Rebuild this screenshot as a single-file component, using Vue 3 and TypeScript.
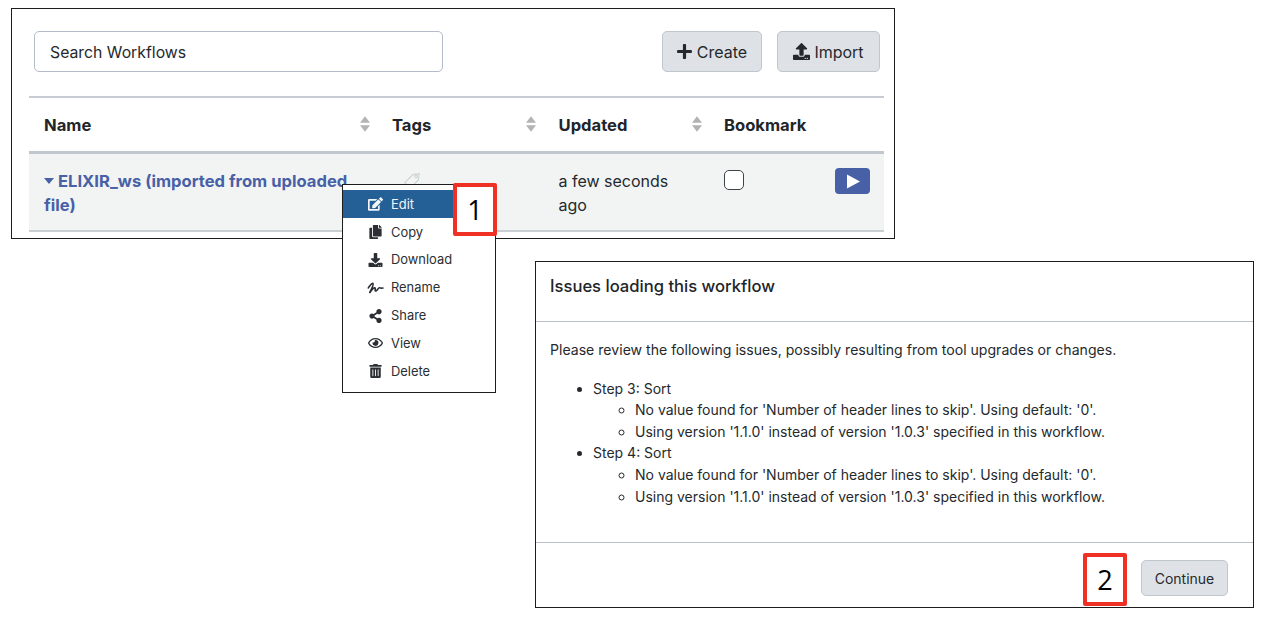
<template>
  <main class="canvas">
    <section class="panel list-panel">
      <div class="toolbar">
        <div class="search">Search Workflows</div>
        <button class="btn create-btn">
          <svg class="btn-icon" viewBox="0 0 448 512"><path :d="icons.plus" /></svg>Create
        </button>
        <button class="btn import-btn">
          <svg class="btn-icon upload" viewBox="0 0 512 512"><path :d="icons.upload" /></svg>Import
        </button>
      </div>
      <div class="grid-table">
        <div class="head-row">
          <div v-for="col in columns" :key="col.label" class="head-cell">
            <span>{{ col.label }}</span>
            <svg v-if="col.sortable" class="sort" viewBox="0 0 11 17"><path d="M5.5 0L11 7H0zM5.5 17L0 10h11z" /></svg>
          </div>
        </div>
        <div class="body-row">
          <div class="name-cell">
            <svg class="caret" viewBox="0 0 10 6"><path d="M0 0h10L5 6z" /></svg>ELIXIR_ws (imported from uploaded file)
          </div>
          <div class="tags-cell">
            <svg class="tag" viewBox="0 0 20 20"><path d="M2 13L11 4l7-1-1 7-9 9z" /><circle cx="14.5" cy="6" r="1.4" /></svg>
          </div>
          <div class="updated-cell">a few seconds ago</div>
          <div class="bookmark-cell">
            <span class="checkbox"></span>
            <button class="run-btn"><svg viewBox="0 0 14 15"><path d="M1 0.5L14 7.5L1 14.5z" /></svg></button>
          </div>
        </div>
      </div>
    </section>

    <ul class="menu">
      <li v-for="item in menu" :key="item.label" class="menu-item" :class="{ active: item.label === 'Edit' }">
        <svg class="menu-icon" :viewBox="item.box" :class="item.cls"><path :d="item.d" /></svg>
        {{ item.label }}
      </li>
    </ul>
    <div class="callout callout-one">1</div>

    <section class="panel modal-panel">
      <header class="modal-head">Issues loading this workflow</header>
      <div class="modal-body">
        <p>Please review the following issues, possibly resulting from tool upgrades or changes.</p>
        <ul class="steps">
          <li v-for="step in steps" :key="step">
            {{ step }}
            <ul>
              <li>No value found for 'Number of header lines to skip'. Using default: '0'.</li>
              <li>Using version '1.1.0' instead of version '1.0.3' specified in this workflow.</li>
            </ul>
          </li>
        </ul>
      </div>
      <footer class="modal-foot">
        <button class="btn continue-btn">Continue</button>
      </footer>
    </section>
    <div class="callout callout-two">2</div>
  </main>
</template>

<script setup lang="ts">
interface MenuItem {
  label: string
  box: string
  d: string
  cls?: string
}

const icons = {
  plus: "M416 208H272V64c0-17.67-14.33-32-32-32h-32c-17.67 0-32 14.33-32 32v144H32c-17.67 0-32 14.33-32 32v32c0 17.67 14.33 32 32 32h144v144c0 17.67 14.33 32 32 32h32c17.67 0 32-14.33 32-32V304h144c17.67 0 32-14.33 32-32v-32c0-17.67-14.33-32-32-32z",
  upload: "M296 384h-80c-13.3 0-24-10.7-24-24V192h-87.7c-17.8 0-26.7-21.5-14.1-34.1L242.3 5.7c7.5-7.5 19.8-7.5 27.3 0l152.2 152.2c12.6 12.6 3.7 34.1-14.1 34.1H320v168c0 13.3-10.7 24-24 24zm216-8v112c0 13.3-10.7 24-24 24H24c-13.3 0-24-10.7-24-24V376c0-13.3 10.7-24 24-24h136v8c0 30.9 25.1 56 56 56h80c30.9 0 56-25.1 56-56v-8h136c13.3 0 24 10.7 24 24zm-124 88c0-11-9-20-20-20s-20 9-20 20 9 20 20 20 20-9 20-20zm64 0c0-11-9-20-20-20s-20 9-20 20 9 20 20 20 20-9 20-20z",
}

const columns = [
  { label: "Name", sortable: true },
  { label: "Tags", sortable: true },
  { label: "Updated", sortable: true },
  { label: "Bookmark", sortable: false },
]

const menu: MenuItem[] = [
  {
    label: "Edit",
    box: "0 0 576 512",
    d: "M402.6 83.2l90.2 90.2c3.8 3.8 3.8 10 0 13.8L274.4 405.6l-92.8 10.3c-12.4 1.4-22.9-9.1-21.5-21.5l10.3-92.8L388.8 83.2c3.8-3.8 10-3.8 13.8 0zm162-22.9l-48.8-48.8c-15.2-15.2-39.9-15.2-55.2 0l-35.4 35.4c-3.8 3.8-3.8 10 0 13.8l90.2 90.2c3.8 3.8 10 3.8 13.8 0l35.4-35.4c15.2-15.3 15.2-40 0-55.2zM384 346.2V448H64V128h229.8c3.2 0 6.2-1.3 8.5-3.5l40-40c7.6-7.6 2.2-20.5-8.5-20.5H48C21.5 64 0 85.5 0 112v352c0 26.5 21.5 48 48 48h352c26.5 0 48-21.5 48-48V306.2c0-10.7-12.9-16-20.5-8.5l-40 40c-2.2 2.3-3.5 5.3-3.5 8.5z",
  },
  {
    label: "Copy",
    box: "0 0 448 512",
    d: "M320 448v40c0 13.255-10.745 24-24 24H24c-13.255 0-24-10.745-24-24V120c0-13.255 10.745-24 24-24h72v296c0 30.879 25.121 56 56 56h168zm0-344V0H152c-13.255 0-24 10.745-24 24v368c0 13.255 10.745 24 24 24h272c13.255 0 24-10.745 24-24V128H344c-13.2 0-24-10.8-24-24zm120.971-31.029L375.029 7.029A24 24 0 0 0 358.059 0H352v96h96v-6.059a24 24 0 0 0-7.029-16.97z",
  },
  {
    label: "Download",
    box: "0 0 512 512",
    d: "M216 0h80c13.3 0 24 10.7 24 24v168h87.7c17.8 0 26.7 21.5 14.1 34.1L269.7 378.3c-7.5 7.5-19.8 7.5-27.3 0L90.1 226.1c-12.6-12.6-3.7-34.1 14.1-34.1H192V24c0-13.3 10.7-24 24-24zm296 376v112c0 13.3-10.7 24-24 24H24c-13.3 0-24-10.7-24-24V376c0-13.3 10.7-24 24-24h146.7l49 49c20.1 20.1 52.5 20.1 72.6 0l49-49H488c13.3 0 24 10.7 24 24zm-124 88c0-11-9-20-20-20s-20 9-20 20 9 20 20 20 20-9 20-20zm64 0c0-11-9-20-20-20s-20 9-20 20 9 20 20 20 20-9 20-20z",
  },
  {
    label: "Rename",
    box: "0 0 17 12",
    cls: "signature",
    d: "M1 6.5C2 4.5 5 0.8 6 1.5C7 2.5 3.5 9 2.5 11C4.5 8 7 5.5 8 6C8.8 6.6 7.5 9 8.6 9C10 9 11 6 12.5 5.8C13.6 5.7 14.5 6.8 16.5 5.8",
  },
  {
    label: "Share",
    box: "0 0 448 512",
    d: "M352 320c-22.608 0-43.387 7.819-59.79 20.895l-102.486-64.054a96.551 96.551 0 0 0 0-41.683l102.486-64.054C308.613 184.181 329.392 192 352 192c53.019 0 96-42.981 96-96S405.019 0 352 0s-96 42.981-96 96c0 7.158.79 14.13 2.276 20.841L155.79 180.895C139.387 167.819 118.608 160 96 160c-53.019 0-96 42.981-96 96s42.981 96 96 96c22.608 0 43.387-7.819 59.79-20.895l102.486 64.054A96.301 96.301 0 0 0 256 416c0 53.019 42.981 96 96 96s96-42.981 96-96-42.981-96-96-96z",
  },
  {
    label: "View",
    box: "0 0 576 512",
    d: "M288 144a110.94 110.94 0 0 0-31.24 5 55.4 55.4 0 0 1 7.24 27 56 56 0 0 1-56 56 55.4 55.4 0 0 1-27-7.24A111.71 111.71 0 1 0 288 144zm284.52 97.4C518.29 135.59 410.93 64 288 64S57.68 135.64 3.48 241.41a32.35 32.35 0 0 0 0 29.19C57.71 376.41 165.07 448 288 448s230.32-71.64 284.52-177.41a32.35 32.35 0 0 0 0-29.19zM288 400c-98.65 0-189.09-55-237.93-144C98.91 167 189.34 112 288 112s189.09 55 237.93 144C477.1 345 386.66 400 288 400z",
  },
  {
    label: "Delete",
    box: "0 0 448 512",
    d: "M32 464a48 48 0 0 0 48 48h288a48 48 0 0 0 48-48V128H32zm272-256a16 16 0 0 1 32 0v224a16 16 0 0 1-32 0zm-96 0a16 16 0 0 1 32 0v224a16 16 0 0 1-32 0zm-96 0a16 16 0 0 1 32 0v224a16 16 0 0 1-32 0zM432 32H312l-9.4-18.7A24 24 0 0 0 281.1 0H166.8a23.72 23.72 0 0 0-21.4 13.3L136 32H16A16 16 0 0 0 0 48v32a16 16 0 0 0 16 16h416a16 16 0 0 0 16-16V48a16 16 0 0 0-16-16z",
  },
]

const steps = ["Step 3: Sort", "Step 4: Sort"]
</script>

<style>
body {
  background: #fff;
}
</style>

<style scoped>
.canvas {
  position: relative;
  width: 1262px;
  height: 618px;
  overflow: hidden;
  font-family: Inter, "Liberation Sans", sans-serif;
  color: #25292d;
}

.panel {
  position: absolute;
  box-sizing: border-box;
  background: #fff;
  border: 1px solid #1c1c1c;
}

.list-panel {
  left: 11px;
  top: 8px;
  width: 884px;
  height: 231px;
  padding: 22px 10px 0 17px;
}

.toolbar {
  display: flex;
  margin-bottom: 24px;
  padding: 0 4px 0 5px;
}

.search {
  box-sizing: border-box;
  width: 409px;
  height: 41px;
  margin-right: 219px;
  padding: 0 15px;
  line-height: 41px;
  font-size: 15.8px;
  border: 1px solid #b4bcc9;
  border-radius: 5px;
}

.btn {
  box-sizing: border-box;
  height: 41px;
  background: #dee2e6;
  border: 1px solid #bec6ce;
  border-radius: 5px;
  color: #25292d;
  font: 16px Inter, "Liberation Sans", sans-serif;
  display: inline-flex;
  align-items: center;
  justify-content: center;
  padding: 0;
}

.create-btn {
  width: 100px;
  margin-right: 15px;
}

.import-btn {
  width: 103px;
}

.btn-icon {
  width: 15px;
  height: 17px;
  margin-right: 5px;
  fill: #25292d;
}

.btn-icon.upload {
  width: 17px;
  margin-right: 4px;
}

.grid-table {
  border-top: 2px solid #c6ccd3;
}

.head-row,
.body-row {
  display: grid;
  grid-template-columns: 348px 166.5px 165.5px 175px;
}

.head-row {
  height: 53px;
  border-bottom: 3px solid #c0c7cf;
}

.head-cell {
  display: flex;
  align-items: center;
  justify-content: space-between;
  padding: 1px 7.5px 0 15px;
  font-size: 16.6px;
  font-weight: 700;
  color: #212529;
}

.sort {
  width: 10px;
  height: 16px;
  margin-top: -2px;
  fill: #b3b3b3;
}

.body-row {
  height: 76px;
  background: #f2f4f4;
  border-bottom: 2px solid #c9ced3;
  font-size: 16px;
  line-height: 24px;
}

.name-cell {
  padding: 15px 15px 0;
  font-size: 16.6px;
  font-weight: 700;
  color: #4760a6;
}

.caret {
  width: 10px;
  height: 6px;
  margin: 0 4px 3px 0;
  fill: #4760a6;
}

.tags-cell {
  padding: 17px 15px 0;
}

.tag {
  width: 18px;
  height: 18px;
  margin-left: 11px;
  fill: none;
  stroke: #c9d4cf;
  stroke-width: 1.2;
}

.updated-cell {
  padding: 15px 30px 0 15px;
}

.bookmark-cell {
  display: flex;
  justify-content: space-between;
  padding: 16px 14px 0 15px;
}

.checkbox {
  box-sizing: border-box;
  width: 20px;
  height: 20px;
  background: #fff;
  border: 1px solid #3d4349;
  border-radius: 5px;
}

.run-btn {
  width: 35px;
  height: 26px;
  margin-top: -2px;
  background: #4760a6;
  border: 0;
  border-radius: 4px;
  padding: 0;
  display: flex;
  align-items: center;
  justify-content: center;
}

.run-btn svg {
  width: 14px;
  height: 15px;
  fill: #fff;
}

.menu {
  position: absolute;
  left: 342px;
  top: 184px;
  box-sizing: border-box;
  width: 154px;
  height: 209px;
  margin: 0;
  padding: 5px 0 0;
  list-style: none;
  background: #fff;
  border: 1px solid #1c1c1c;
  font-size: 12.9px;
}

.menu-item {
  box-sizing: border-box;
  display: flex;
  align-items: center;
  height: 27.8px;
  padding: 1px 0 0 25px;
  color: #2b2f33;
}

.menu-item.active {
  background: #245f96;
  color: #f2f6fa;
}

.menu-icon {
  width: 15px;
  height: 14px;
  margin-right: 8px;
  fill: currentColor;
}

.menu-icon.signature {
  width: 17px;
  height: 12px;
  margin: 0 7px 0 -1px;
  fill: none;
  stroke: currentColor;
  stroke-width: 1.6;
}

.callout {
  position: absolute;
  box-sizing: border-box;
  width: 44px;
  height: 53px;
  border: 4px solid #ee3124;
  border-radius: 2px;
  background: #fff;
  color: #000;
  font: 500 27px "Open Sans", sans-serif;
  display: flex;
  align-items: center;
  justify-content: center;
}

.callout-one {
  left: 453px;
  top: 183px;
}

.callout-two {
  left: 1083px;
  top: 553px;
}

.modal-panel {
  left: 535px;
  top: 261px;
  width: 719px;
  height: 347px;
  display: flex;
  flex-direction: column;
}

.modal-head {
  box-sizing: border-box;
  height: 60px;
  padding: 13px 14px 0;
  line-height: 22px;
  font-size: 16.6px;
  font-weight: 500;
  color: #212529;
  border-bottom: 1px solid #b7bfc9;
}

.modal-body {
  flex: 1;
  padding: 17px 14px 0;
  font-size: 14.1px;
  line-height: 21.6px;
}

.modal-body p {
  margin: 0 0 17px;
}

.steps {
  margin: 0;
  padding-left: 43px;
  font-size: 14px;
}

.steps ul {
  margin: 0;
  padding-left: 42px;
}

.modal-foot {
  box-sizing: border-box;
  height: 65px;
  display: flex;
  justify-content: flex-end;
  padding: 17px 25px 0 0;
  border-top: 1px solid #b7bfc9;
}

.continue-btn {
  width: 87px;
  height: 36px;
  font-size: 14px;
}
</style>
